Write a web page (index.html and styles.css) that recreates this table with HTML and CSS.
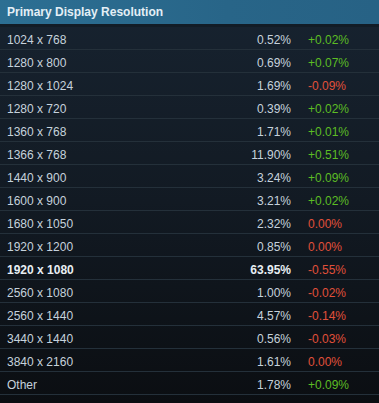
FILE: index.html
```html
<!DOCTYPE html>
<html>
<head>
<meta charset="utf-8">
<link rel="stylesheet" href="styles.css">
</head>
<body>
<div class="panel">
  <div class="header">Primary Display Resolution</div>
  <div class="rows">
    <div class="row"><span class="res">1024 x 768</span><span class="pct">0.52%</span><span class="chg up">+0.02%</span></div>
    <div class="row"><span class="res">1280 x 800</span><span class="pct">0.69%</span><span class="chg up">+0.07%</span></div>
    <div class="row"><span class="res">1280 x 1024</span><span class="pct">1.69%</span><span class="chg down">-0.09%</span></div>
    <div class="row"><span class="res">1280 x 720</span><span class="pct">0.39%</span><span class="chg up">+0.02%</span></div>
    <div class="row"><span class="res">1360 x 768</span><span class="pct">1.71%</span><span class="chg up">+0.01%</span></div>
    <div class="row"><span class="res">1366 x 768</span><span class="pct">11.90%</span><span class="chg up">+0.51%</span></div>
    <div class="row"><span class="res">1440 x 900</span><span class="pct">3.24%</span><span class="chg up">+0.09%</span></div>
    <div class="row"><span class="res">1600 x 900</span><span class="pct">3.21%</span><span class="chg up">+0.02%</span></div>
    <div class="row"><span class="res">1680 x 1050</span><span class="pct">2.32%</span><span class="chg down">0.00%</span></div>
    <div class="row"><span class="res">1920 x 1200</span><span class="pct">0.85%</span><span class="chg down">0.00%</span></div>
    <div class="row bold"><span class="res">1920 x 1080</span><span class="pct">63.95%</span><span class="chg down">-0.55%</span></div>
    <div class="row"><span class="res">2560 x 1080</span><span class="pct">1.00%</span><span class="chg down">-0.02%</span></div>
    <div class="row"><span class="res">2560 x 1440</span><span class="pct">4.57%</span><span class="chg down">-0.14%</span></div>
    <div class="row"><span class="res">3440 x 1440</span><span class="pct">0.56%</span><span class="chg down">-0.03%</span></div>
    <div class="row"><span class="res">3840 x 2160</span><span class="pct">1.61%</span><span class="chg down">0.00%</span></div>
    <div class="row"><span class="res">Other</span><span class="pct">1.78%</span><span class="chg up">+0.09%</span></div>
  </div>
</div>
</body>
</html>
```

FILE: styles.css
```css
html, body {
  margin: 0;
  padding: 0;
  background: #0c0f13;
}
.panel {
  width: 379px;
  height: 403px;
  overflow: hidden;
  font-family: "Liberation Sans", Arial, sans-serif;
  font-size: 12px;
  background: linear-gradient(to bottom, #172330 0%, #121a23 50%, #0b0e12 100%);
}
.header {
  height: 24px;
  line-height: 25px;
  padding-left: 7px;
  font-weight: bold;
  color: #e4eff6;
  background: linear-gradient(to right, #2c6f93 0%, #286588 60%, #276285 100%);
  border-bottom: 3px solid #121c26;
}
.row {
  display: flex;
  height: 20px;
  padding-top: 2px;
  line-height: 22px;
  border-bottom: 1px solid #24303a;
  color: #c6d2dc;
}
.res {
  width: 200px;
  padding-left: 7px;
}
.pct {
  width: 84px;
  text-align: right;
}
.chg {
  padding-left: 17px;
}
.up { color: #5cbd24; }
.down { color: #e0503a; }
.bold .res, .bold .pct {
  font-weight: bold;
  color: #e8eef3;
}
```
